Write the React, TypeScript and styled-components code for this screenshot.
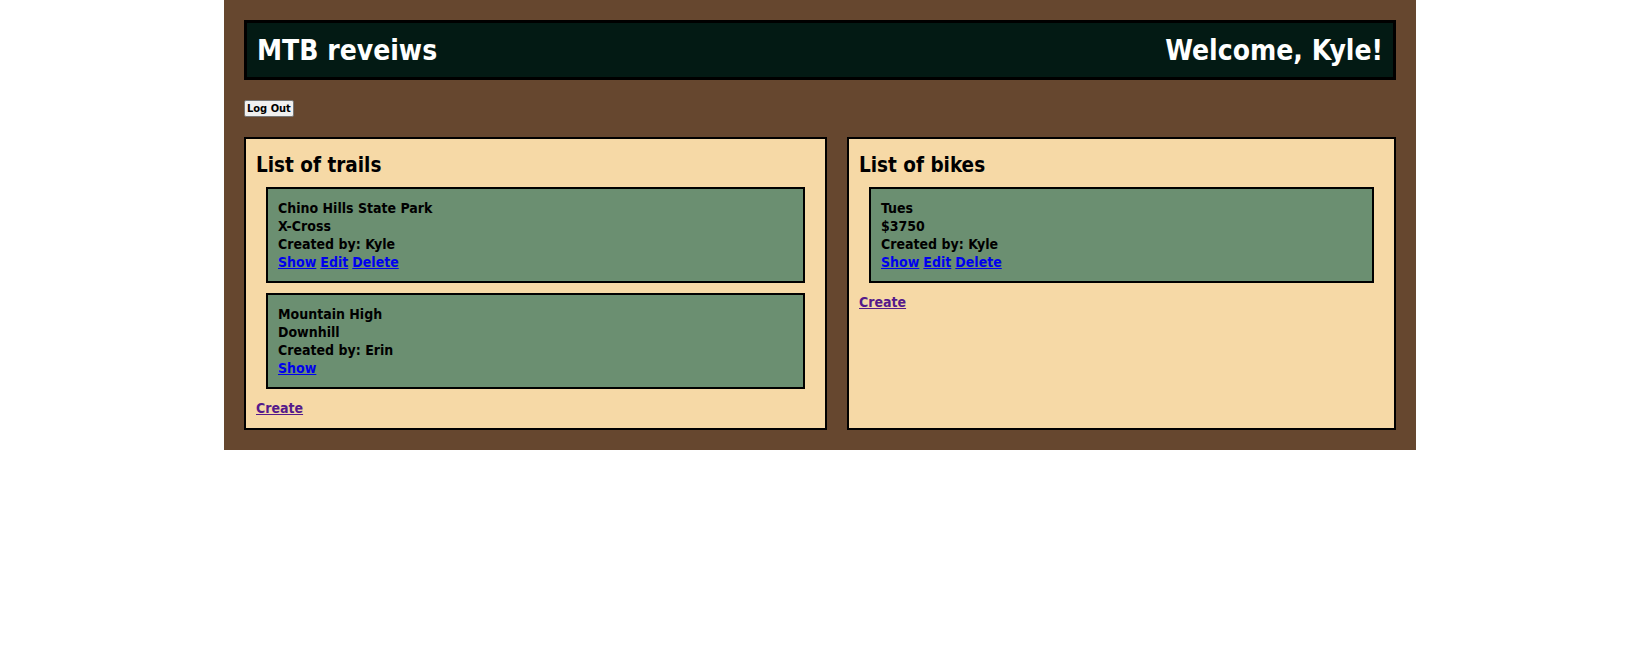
import React from 'react';
import styled, { createGlobalStyle } from 'styled-components';

const GlobalStyle = createGlobalStyle`
  body {
    margin: 0;
    background: #fff;
    font-family: "DejaVu Sans Condensed", "Liberation Sans", sans-serif;
    font-weight: 700;
  }
`;

const Page = styled.div`
  width: 1152px;
  margin-left: 224px;
  padding: 20px;
  background-color: #66472f;
`;

const Header = styled.header`
  display: flex;
  justify-content: space-between;
  align-items: center;
  height: 54px;
  padding: 0 10px;
  border: 3px solid #000;
  background-color: #031a14;
  color: #fff;
  & > h1 {
    margin: 0;
    font-size: 28px;
    font-weight: 700;
  }
`;

const LogOut = styled.button`
  display: block;
  margin-top: 20px;
  padding: 1px 2px;
  height: 17px;
  font-family: inherit;
  font-weight: 700;
  font-size: 11px;
  color: #000;
  background: #f0f0f0;
  border: 1px solid #767676;
  border-radius: 2px;
`;

const Columns = styled.div`
  display: flex;
  gap: 20px;
  margin-top: 20px;
`;

const Panel = styled.section<{ $width?: number }>`
  ${({ $width }) => ($width ? `width: ${$width}px;` : 'flex: 1;')}
  box-sizing: border-box;
  padding: 10px 10px 11px;
  border: 2px solid #000;
  background-color: #f6d9a6;
  & > h2 {
    margin: 3px 0 9px;
    font-size: 20.5px;
    line-height: 26px;
  }
`;

const Card = styled.div`
  margin: 0 10px 10px;
  padding: 10px;
  border: 2px solid #000;
  background-color: #6b8f71;
  font-size: 14px;
  line-height: 18px;
  color: #000;
`;

const Actions = styled.div`
  display: flex;
  gap: 4px;
`;

const Link = styled.a<{ $visited?: boolean }>`
  color: ${({ $visited }) => ($visited ? '#551a8b' : '#0000ee')};
  text-decoration: underline;
  cursor: pointer;
`;

const CreateLink = styled(Link)`
  display: block;
  font-size: 14px;
  line-height: 18px;
`;

interface Item {
  lines: string[];
  owner: string;
  mine: boolean;
}

const trails: Item[] = [
  { lines: ['Chino Hills State Park', 'X-Cross'], owner: 'Kyle', mine: true },
  { lines: ['Mountain High', 'Downhill'], owner: 'Erin', mine: false },
];

const bikes: Item[] = [{ lines: ['Tues', '$3750'], owner: 'Kyle', mine: true }];

const ItemCard: React.FC<{ item: Item }> = ({ item }) => (
  <Card>
    {item.lines.map((l) => (
      <div key={l}>{l}</div>
    ))}
    <div>Created by: {item.owner}</div>
    <Actions>
      <Link>Show</Link>
      {item.mine && <Link>Edit</Link>}
      {item.mine && <Link>Delete</Link>}
    </Actions>
  </Card>
);

export default function App() {
  return (
    <>
      <GlobalStyle />
      <Page>
        <Header>
          <h1>MTB reveiws</h1>
          <h1>Welcome, Kyle!</h1>
        </Header>
        <LogOut>Log Out</LogOut>
        <Columns>
          <Panel $width={583}>
            <h2>List of trails</h2>
            {trails.map((t) => (
              <ItemCard key={t.lines[0]} item={t} />
            ))}
            <CreateLink $visited>Create</CreateLink>
          </Panel>
          <Panel>
            <h2>List of bikes</h2>
            {bikes.map((b) => (
              <ItemCard key={b.lines[0]} item={b} />
            ))}
            <CreateLink $visited>Create</CreateLink>
          </Panel>
        </Columns>
      </Page>
    </>
  );
}
